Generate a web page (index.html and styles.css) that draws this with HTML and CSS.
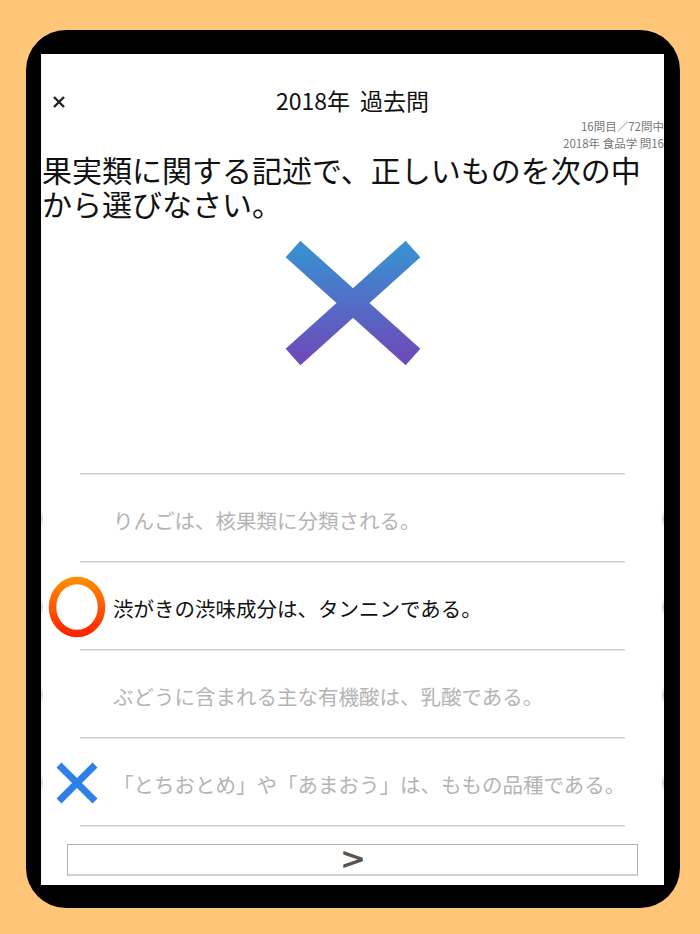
FILE: index.html
```html
<!DOCTYPE html>
<html lang="ja">
<head>
<meta charset="utf-8">
<title>2018年 過去問</title>
<link rel="stylesheet" href="styles.css">
</head>
<body>
<div class="device">
  <div class="screen">
    <div class="header">
      <svg class="close" width="12" height="12" viewBox="0 0 12 12"><path d="M1 1 L11 11 M11 1 L1 11" stroke="#222" stroke-width="2.4" fill="none"/></svg>
      <div class="title">2018年 過去問</div>
    </div>
    <div class="meta">
      <div>16問目／72問中</div>
      <div>2018年 食品学 問16</div>
    </div>
    <div class="question">果実類に関する記述で、正しいものを次の中から選びなさい。</div>
    <div class="result">
      <svg width="140" height="126" viewBox="0 0 140 126">
        <defs>
          <linearGradient id="xg" x1="0" y1="0" x2="0" y2="1">
            <stop offset="0" stop-color="#3990d1"/>
            <stop offset="1" stop-color="#6c4cbb"/>
          </linearGradient>
        </defs>
        <path d="M9 8 L129 116 M129 8 L9 116" stroke="url(#xg)" stroke-width="22" fill="none" stroke-linecap="butt"/>
      </svg>
    </div>
    <div class="options">
      <div class="sep"></div>
      <div class="option dim">
        <div class="icon"></div>
        <div class="text">りんごは、核果類に分類される。</div>
      </div>
      <div class="sep"></div>
      <div class="option">
        <div class="icon">
          <svg width="62" height="64" viewBox="0 0 62 64">
            <defs>
              <linearGradient id="og" x1="0" y1="0" x2="0" y2="1">
                <stop offset="0" stop-color="#ff8c00"/>
                <stop offset="1" stop-color="#ff2500"/>
              </linearGradient>
            </defs>
            <ellipse cx="31" cy="32" rx="24.5" ry="26.5" stroke="url(#og)" stroke-width="7.5" fill="none"/>
          </svg>
        </div>
        <div class="text">渋がきの渋味成分は、タンニンである。</div>
      </div>
      <div class="sep"></div>
      <div class="option dim">
        <div class="icon"></div>
        <div class="text">ぶどうに含まれる主な有機酸は、乳酸である。</div>
      </div>
      <div class="sep"></div>
      <div class="option dim">
        <div class="icon">
          <svg width="46" height="42" viewBox="0 0 46 42"><path d="M5 3 L41 39 M41 3 L5 39" stroke="#2f7fe9" stroke-width="7" fill="none"/></svg>
        </div>
        <div class="text">「とちおとめ」や「あまおう」は、ももの品種である。</div>
      </div>
      <div class="sep"></div>
    </div>
    <div class="next"><span>&gt;</span></div>
  </div>
</div>
</body>
</html>
```
FILE: styles.css
```css
html, body {
  margin: 0;
  padding: 0;
}
body {
  background: #ffc578;
  width: 700px;
  height: 934px;
  overflow: hidden;
  font-family: "Noto Sans CJK JP", "Noto Sans", sans-serif;
}
.device {
  margin: 30px 0 0 26px;
  width: 654px;
  height: 878px;
  box-sizing: border-box;
  background: #000;
  border-radius: 40px;
  padding: 24px 16px 23px 15px;
}
.screen {
  background: #fff;
  width: 623px;
  height: 831px;
  display: flex;
  flex-direction: column;
}
.header {
  position: relative;
  margin-top: 33px;
  height: 28px;
  display: flex;
  align-items: center;
  justify-content: center;
}
.close {
  position: absolute;
  left: 12px;
  top: 9px;
}
.title {
  font-size: 23px;
  line-height: 28px;
  color: #111;
  word-spacing: 5px;
  margin-top: -2px;
}
.meta {
  margin-top: 3px;
  text-align: right;
  font-size: 11.5px;
  line-height: 17px;
  color: #777;
}
.question {
  font-size: 30px;
  line-height: 34px;
  color: #111;
  padding-left: 1px;
  height: 68px;
}
.result {
  margin-top: 21px;
  display: flex;
  justify-content: center;
  height: 126px;
}
.result svg {
  margin-left: 2px;
}
.options {
  margin-top: 106px;
  display: flex;
  flex-direction: column;
}
.sep {
  height: 1px;
  background: #c8c8c8;
  margin: 0 39px;
  box-shadow: 0 1px 0 #eee;
}
.option {
  position: relative;
  height: 87px;
  display: flex;
  align-items: center;
}
.option::before,
.option::after {
  content: "";
  position: absolute;
  top: 36px;
  width: 2px;
  height: 18px;
  background: linear-gradient(#fff, #d8d8d8, #fff);
}
.option::before { left: 0; }
.option::after { right: 0; }
.icon {
  width: 72px;
  display: flex;
  justify-content: center;
  align-items: center;
  padding-top: 3px;
}
.text {
  font-size: 20.5px;
  line-height: 28px;
  color: #111;
  padding-top: 4px;
  white-space: nowrap;
}
.dim .text {
  color: #b4b4b4;
}
.next {
  margin: 18px 26px 0 26px;
  height: 29px;
  border: 1px solid #b0b0b0;
  border-bottom: 2px solid #cfcfcf;
  display: flex;
  justify-content: center;
  align-items: center;
}
.next span {
  font-family: "DejaVu Sans", sans-serif;
  font-size: 31px;
  line-height: 29px;
  color: #5a5252;
  font-weight: bold;
  margin-left: 1px;
  margin-top: -3px;
}
```
